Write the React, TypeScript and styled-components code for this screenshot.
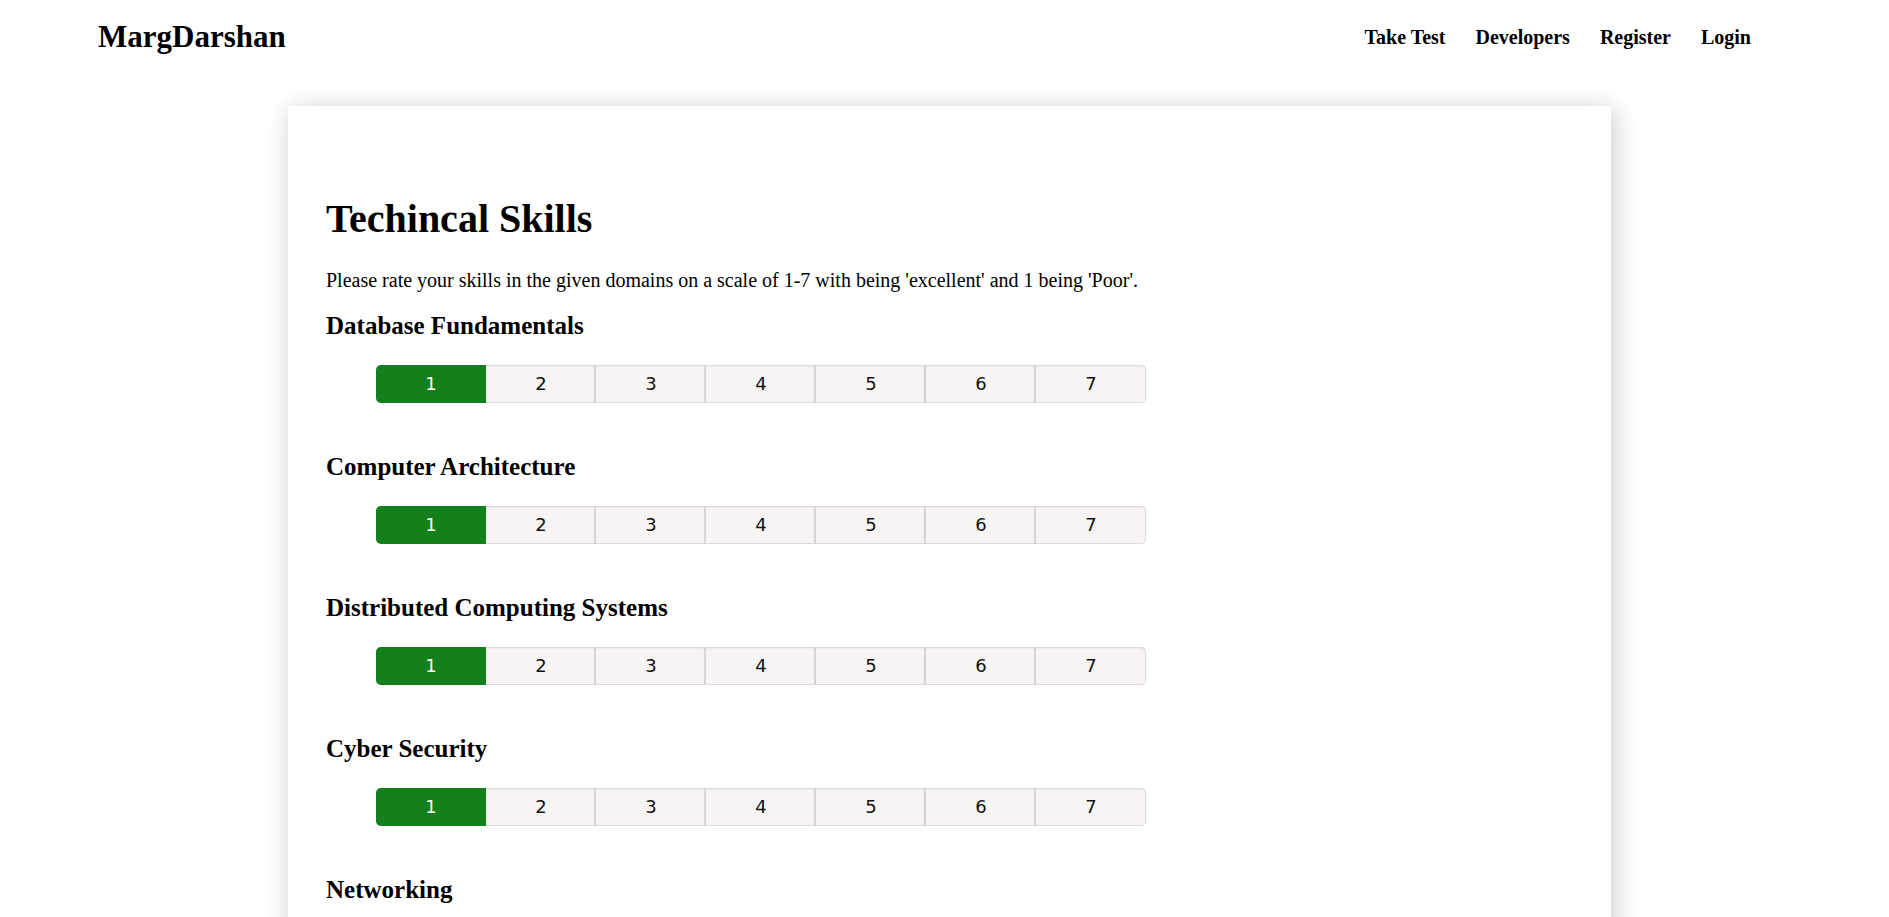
import React, { useState } from "react";
import styled, { createGlobalStyle } from "styled-components";

const skills = [
  "Database Fundamentals",
  "Computer Architecture",
  "Distributed Computing Systems",
  "Cyber Security",
  "Networking",
  "Software Development",
  "Programming Skills",
];

const GlobalStyle = createGlobalStyle`
  body {
    margin: 0;
    background: #fff;
    color: #000;
    font-family: "Liberation Serif", "Times New Roman", serif;
  }
`;

const Header = styled.header`
  display: flex;
  align-items: center;
  justify-content: space-between;
  height: 74px;
  padding: 0 138px 0 98px;
`;

const Brand = styled.div`
  font-size: 31px;
  line-height: 34px;
  font-weight: 700;
`;

const Nav = styled.nav`
  display: flex;
  gap: 30px;
`;

const NavLink = styled.a`
  font-size: 20px;
  line-height: 22px;
  font-weight: 700;
  color: #000;
  text-decoration: none;
  cursor: pointer;
`;

const Card = styled.main`
  width: 1323px;
  margin: 32px 0 40px 288px;
  padding: 90px 38px 60px;
  box-sizing: border-box;
  background: #fff;
  box-shadow: 3px 4px 24px rgba(0, 0, 0, 0.22);
`;

const Title = styled.h1`
  margin: 0 0 27px;
  font-size: 40px;
  line-height: 46px;
  font-weight: 700;
`;

const Intro = styled.p`
  margin: 0 0 20px;
  font-size: 20px;
  line-height: 23px;
`;

const Section = styled.section`
  margin-bottom: 50px;
`;

const SkillName = styled.h3`
  margin: 0 0 25px;
  font-size: 25px;
  line-height: 28px;
  font-weight: 700;
`;

const Scale = styled.div`
  display: grid;
  grid-template-columns: repeat(7, 110px);
  margin-left: 50px;
  width: 770px;
  border-radius: 5px;
  overflow: hidden;
  background: #f7f4f3;
  box-shadow: inset 0 0 0 1px #dedbda, inset 0 2px 2px -1px rgba(0, 0, 0, 0.14);

  input {
    display: none;
  }
`;

const Step = styled.label<{ $active: boolean; $last: boolean }>`
  height: 38px;
  line-height: 38px;
  text-align: center;
  font-family: "DejaVu Sans", Verdana, sans-serif;
  font-size: 18px;
  cursor: pointer;
  color: ${(p) => (p.$active ? "#fff" : "#111")};
  background: ${(p) => (p.$active ? "#13801b" : "transparent")};
  box-shadow: ${(p) =>
    p.$active || p.$last ? "none" : "inset -3px 0 1px -1px #d6d3d2"};
`;

const RatingRow: React.FC<{ name: string; index: number }> = ({ name, index }) => {
  const [value, setValue] = useState(1);

  return (
    <Section>
      <SkillName>{name}</SkillName>
      <Scale>
        {[1, 2, 3, 4, 5, 6, 7].map((n) => (
          <React.Fragment key={n}>
            <input
              type="radio"
              id={`skill-${index}-${n}`}
              name={`skill-${index}`}
              value={n}
              checked={value === n}
              onChange={() => setValue(n)}
            />
            <Step htmlFor={`skill-${index}-${n}`} $active={value === n} $last={n === 7}>
              {n}
            </Step>
          </React.Fragment>
        ))}
      </Scale>
    </Section>
  );
};

const App: React.FC = () => {
  return (
    <>
      <GlobalStyle />
      <Header>
        <Brand>MargDarshan</Brand>
        <Nav>
          <NavLink>Take Test</NavLink>
          <NavLink>Developers</NavLink>
          <NavLink>Register</NavLink>
          <NavLink>Login</NavLink>
        </Nav>
      </Header>
      <Card>
        <Title>Techincal Skills</Title>
        <Intro>
          Please rate your skills in the given domains on a scale of 1-7 with being 'excellent'
          and 1 being 'Poor'.
        </Intro>
        {skills.map((s, i) => (
          <RatingRow key={s} name={s} index={i} />
        ))}
      </Card>
    </>
  );
};

export default App;
